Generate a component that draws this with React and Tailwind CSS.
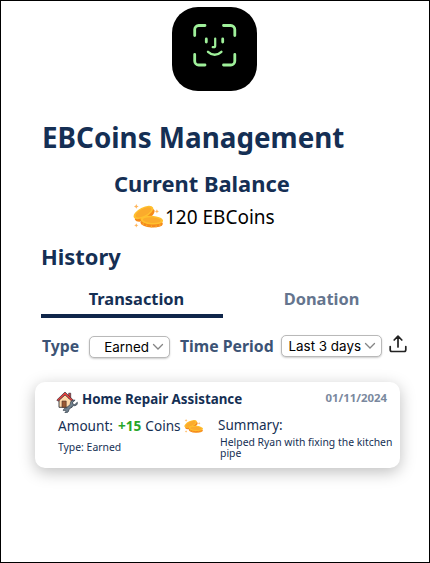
import React from "react";

function FaceLogo() {
  return (
    <svg viewBox="0 0 85 84" className="h-[84px] w-[85px]" fill="none">
      <rect width="85" height="84" rx="26" fill="#000" />
      <g stroke="#9ff09a" strokeWidth="2.8" strokeLinecap="round">
        <path d="M22.700 28.500V22.500a4 4 0 0 1 4-4H33M51.500 18.500h7.300a4 4 0 0 1 4 4v6M62.800 47.500v6.500a4 4 0 0 1-4 4h-7.300M33 58h-6.300a4 4 0 0 1-4-4v-6.500" />
        <path d="M34.300 32v3M50.700 32v3" />
        <path d="M43.200 31.500v7.200a1.500 1.500 0 0 1-1.500 1.500h-1" strokeWidth="2.2" />
        <path d="M36 44.800q6.700 6 13.400 0" strokeWidth="2.4" />
      </g>
    </svg>
  );
}

function Coins({ className }) {
  return (
    <svg viewBox="0 0 32 25" className={className} preserveAspectRatio="none">
      <path d="M3.500 0l.8 1.700 1.700.8-1.700.8-.8 1.700-.8-1.700L1 2.500l1.700-.8zM25.500 5.500l.7 1.500 1.500.7-1.500.7-.7 1.500-.7-1.500-1.500-.7 1.500-.7zM3.500 20l.7 1.500 1.500.7-1.500.7-.7 1.500-.7-1.500-1.500-.7 1.500-.7z" fill="#ffb55a" />
      <g transform="rotate(-27 11.500 9.500)">
        <ellipse cx="11.500" cy="11.700" rx="11.500" ry="5.300" fill="#f58a1c" />
        <ellipse cx="11.500" cy="8.700" rx="11.500" ry="5.200" fill="#ffc02e" />
        <ellipse cx="11.500" cy="8.700" rx="9.300" ry="3.700" fill="#fbab2c" />
      </g>
      <g transform="rotate(4 20 18)">
        <ellipse cx="20" cy="19.900" rx="12" ry="4.600" fill="#f58a1c" />
        <ellipse cx="20" cy="16.800" rx="12" ry="4.600" fill="#ffc02e" />
        <ellipse cx="20" cy="16.800" rx="9.600" ry="3" fill="#fbab2c" />
        <path d="M11 20.500v2M15 22v2M20 22.500v2M25 22v2M29 20.500v2" stroke="#ffb52e" strokeWidth="1" />
      </g>
    </svg>
  );
}

function HouseIcon() {
  return (
    <svg viewBox="0 0 22 22" className="h-[22px] w-[22px] shrink-0">
      <path d="M3 9v7.300h13V9L9.500 3z" fill="#ffd9a8" stroke="#30343c" strokeWidth=".9" />
      <path d="M12.700 2.200h2v5h-2z" fill="#e9403c" stroke="#30343c" strokeWidth=".7" />
      <path d="M.8 9L9 1l8.200 8-1.300 1.300L9 3.900 2 10.300z" fill="#e9403c" stroke="#30343c" strokeWidth=".7" strokeLinejoin="round" />
      <path d="M6 10h4.200v6.300H6z" fill="#9a5932" stroke="#4a3328" strokeWidth=".6" />
      <path d="M21.300 11.200l-2.500 2.400-1.900-.4-.3-1.900 2.500-2.100c-2.900-.6-5.200 1.200-4.700 4.100l-4.300 3.900c-1.400-.3-2.900.8-2.800 2.400l1.900-.4.700 1.100-1 1.400c2.500.4 4-.9 3.900-3l4.300-4c2.800.5 4.800-1 4.200-3.500z" fill="#70818e" stroke="#303b46" strokeWidth=".7" strokeLinejoin="round" />
    </svg>
  );
}

function Select({ label, className }) {
  return (
    <div className={`flex h-[22px] shrink-0 items-center justify-end rounded-[5px] border border-[#b9b9b9] bg-white pr-[5px] font-[Inter,sans-serif] text-[13.4px] font-normal text-black shadow-[0_1px_2px_rgba(0,0,0,0.2)] ${className}`}>
      <span className="whitespace-nowrap">{label}</span>
      <svg viewBox="0 0 12 8" className="ml-[3px] h-[8px] w-[12px] shrink-0" fill="none">
        <path d="M1.500 1.500L6 6l4.500-4.500" stroke="#858585" strokeWidth="1.300" strokeLinecap="round" />
      </svg>
    </div>
  );
}

function ExportIcon() {
  return (
    <svg viewBox="0 0 18 18" className="mt-[2px] h-[18px] w-[18px] shrink-0" fill="none" stroke="#222" strokeWidth="1.700" strokeLinecap="round" strokeLinejoin="round">
      <path d="M1.200 11.500v3.300q0 1.700 1.700 1.700h12.200q1.700 0 1.700-1.700v-3.300M9 12V1.500M5.200 5L9 1.200 12.800 5" />
    </svg>
  );
}

export default function App() {
  return (
    <main className="flex h-[563px] w-[430px] flex-col overflow-hidden border border-black bg-white font-['Noto_Sans',sans-serif] text-[#152f54]">
      <div className="ml-[171px] mt-[6px]">
        <FaceLogo />
      </div>
      <h1 className="ml-[41px] mt-[26px] whitespace-nowrap text-[27.8px] font-bold leading-[40px]">EBCoins Management</h1>
      <h2 className="ml-[113px] mt-[11px] whitespace-nowrap text-[21.9px] font-bold leading-[32px]">Current Balance</h2>
      <div className="ml-[132px] flex h-[32px] items-center text-black">
        <Coins className="h-[24px] w-[30px] shrink-0" />
        <span className="ml-[2px] mt-px whitespace-nowrap text-[19px] leading-[32px]">120 EBCoins</span>
      </div>
      <h2 className="ml-[40px] mt-[9px] text-[21.9px] font-bold leading-[32px]">History</h2>
      <nav className="ml-[40px] mt-[13px] flex h-[32px] text-[16.4px] font-bold leading-[26px]">
        <div className="w-[182px] border-b-4 border-[#10264a] pl-[9px] text-center">Transaction</div>
        <div className="w-[182px] pl-[15px] text-center text-[#65758e]">Donation</div>
      </nav>
      <div className="ml-[41px] mt-[15px] flex h-[26px] items-start text-[15.8px] font-bold leading-[26px] text-[#3c5375]">
        <span className="w-[47px] shrink-0">Type</span>
        <Select label="Earned" className="mt-[3px] w-[81px]" />
        <span className="ml-[10px] w-[101px] shrink-0 whitespace-nowrap">Time Period</span>
        <Select label="Last 3 days" className="mt-[2px] w-[101px] pr-[4px]" />
        <div className="ml-[7px]">
          <ExportIcon />
        </div>
      </div>
      <article className="ml-[34px] mt-[23px] flex h-[86px] w-[365px] flex-col rounded-[10px] bg-white shadow-[0_4px_16px_rgba(0,0,0,0.26)]">
        <header className="flex h-[34px] items-start pl-[21px] pt-[9px]">
          <HouseIcon />
          <h3 className="ml-[4px] whitespace-nowrap text-[13.35px] font-bold leading-[16px]">Home Repair Assistance</h3>
          <time className="ml-auto mr-[13px] text-[11.4px] font-bold leading-[14px] text-[#7a899e]">01/11/2024</time>
        </header>
        <div className="flex">
          <section className="w-[160px] shrink-0 pl-[23px]">
            <p className="flex h-[20px] items-center whitespace-nowrap text-[13.6px] leading-[20px]">
              Amount:
              <span className="ml-[5px] mr-[4px] font-bold text-[#27a527]">+15</span>
              Coins
              <Coins className="ml-[3px] h-[14px] w-[19px] shrink-0" />
            </p>
            <p className="mt-[4px] text-[10.4px] leading-[14px]">Type: Earned</p>
          </section>
          <section className="w-[205px] pl-[23px]">
            <p className="text-[13.5px] leading-[18px]">Summary:</p>
            <div className="ml-[2px] mt-[3px] text-[10.4px] leading-[11px]">
              <p className="whitespace-nowrap">Helped Ryan with fixing the kitchen</p>
              <p>pipe</p>
            </div>
          </section>
        </div>
      </article>
    </main>
  );
}
